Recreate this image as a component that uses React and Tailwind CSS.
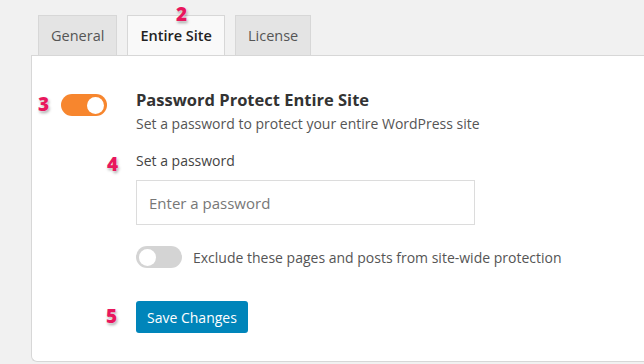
import { useState } from "react";

const font = { fontFamily: '"Open Sans", "Noto Sans", sans-serif' };

// pink step numbers drawn over the screenshot
const Step = ({ n, className }) => (
  <span
    className={
      "absolute text-[19px] font-extrabold leading-none text-[#e8175d] [text-shadow:0_0_2px_#fff,1px_2px_3px_rgba(0,0,0,0.35)] " +
      className
    }
  >
    {n}
  </span>
);

const Toggle = ({ on, onClick }) => (
  <button
    onClick={onClick}
    className={
      "flex h-[22px] w-[46px] shrink-0 items-center rounded-full px-[3px] " +
      (on ? "justify-end bg-[#f7862e]" : "justify-start bg-[#d4d4d4]")
    }
  >
    <span className="h-[17px] w-[17px] rounded-full bg-white" />
  </button>
);

const App = () => {
  const [tab, setTab] = useState("Entire Site");
  const [protect, setProtect] = useState(true);
  const [exclude, setExclude] = useState(false);

  return (
    <div
      className="relative flex h-[364px] w-[644px] flex-col overflow-hidden bg-[#f1f1f1] pl-[31px] pt-[15px]"
      style={font}
    >
      {/* Tabs */}
      <div className="flex gap-[10px] pl-[7px]">
        {["General", "Entire Site", "License"].map((t) => (
          <button
            key={t}
            onClick={() => setTab(t)}
            className={
              "-mb-px h-[41px] border border-[#d7d7d7] px-[12px] text-[14.5px] " +
              (tab === t
                ? "border-b-[#f9f9f9] bg-[#f9f9f9] font-semibold text-[#222]"
                : "bg-[#e4e4e4] text-[#555]")
            }
          >
            {t}
          </button>
        ))}
      </div>

      {/* Panel */}
      <div className="flex-1 rounded-bl-[6px] border border-r-0 border-[#d7d7d7] bg-white pl-[104px] pt-[33px] mb-[2px]">
        <div className="flex items-start">
          <div className="-ml-[75px] mr-[29px] mt-[5px]">
            <Toggle on={protect} onClick={() => setProtect(!protect)} />
          </div>
          <div>
            <h2 className="text-[16.5px] font-bold leading-[22px] text-[#333]">
              Password Protect Entire Site
            </h2>
            <p className="mt-[2px] text-[14px] text-[#555]">
              Set a password to protect your entire WordPress site
            </p>
          </div>
        </div>

        <p className="mt-[16px] text-[14px] text-[#444]">Set a password</p>
        <input
          type="password"
          placeholder="Enter a password"
          className="mt-[9px] h-[45px] w-[339px] border border-[#dcdcdc] px-[12px] text-[15px] text-[#333] outline-none placeholder:text-[#777]"
        />

        <div className="mt-[21px] flex items-center gap-[11px]">
          <Toggle on={exclude} onClick={() => setExclude(!exclude)} />
          <span className="text-[14px] text-[#555]">
            Exclude these pages and posts from site-wide protection
          </span>
        </div>

        <button className="mt-[33px] h-[32px] rounded-[3px] bg-[#0085ba] px-[11px] text-[14px] text-white">
          Save Changes
        </button>
      </div>

      <Step n="2" className="left-[176px] top-[5px]" />
      <Step n="3" className="left-[38px] top-[95px]" />
      <Step n="4" className="left-[107px] top-[155px]" />
      <Step n="5" className="left-[106px] top-[307px]" />
    </div>
  );
};

export default App;
